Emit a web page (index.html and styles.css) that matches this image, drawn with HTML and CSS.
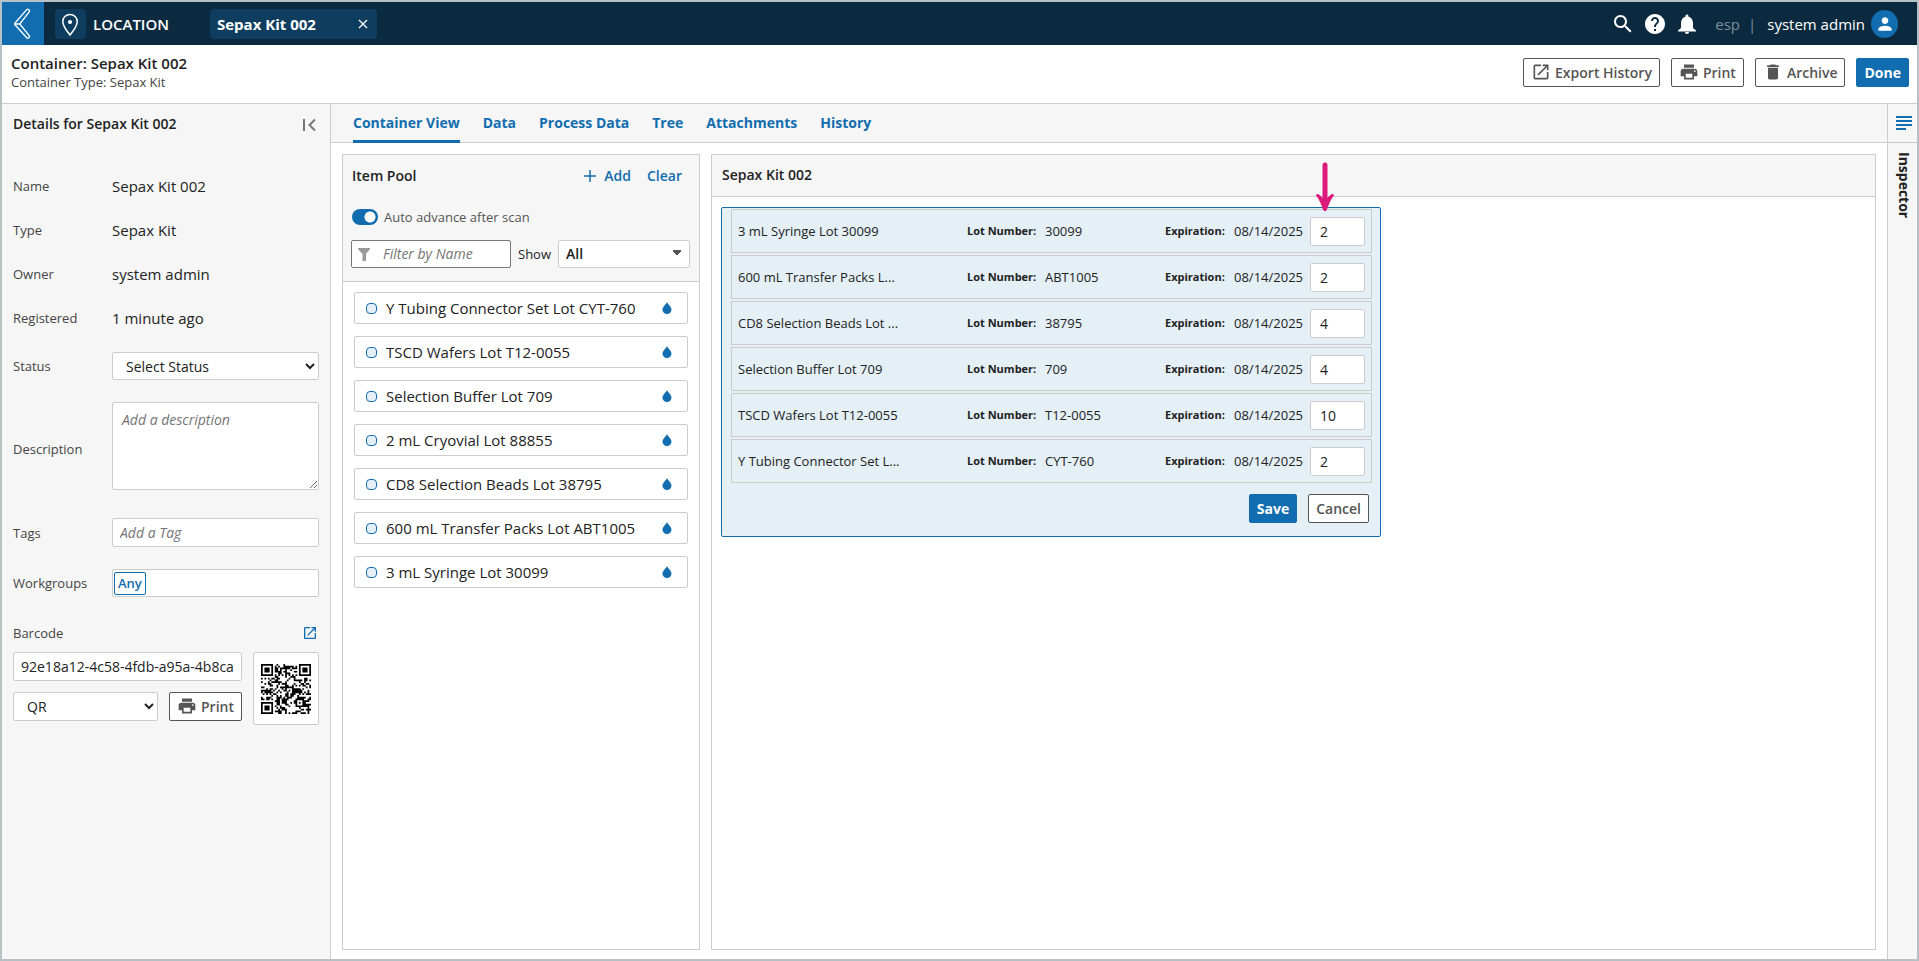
FILE: index.html
```html
<!DOCTYPE html>
<html lang="en">
<head>
<meta charset="utf-8">
<title>Sepax Kit 002</title>
<link rel="stylesheet" href="styles.css">
</head>
<body>
<svg class="sprite" aria-hidden="true">
  <symbol id="i-print" viewBox="0 0 24 24"><path d="M19 8H5c-1.66 0-3 1.34-3 3v6h4v4h12v-4h4v-6c0-1.66-1.34-3-3-3zm-3 11H8v-5h8v5zm3-7c-.55 0-1-.45-1-1s.45-1 1-1 1 .45 1 1-.45 1-1 1zm-1-9H6v4h12V3z"/></symbol>
  <symbol id="i-open" viewBox="0 0 24 24"><path d="M19 19H5V5h7V3H5c-1.11 0-2 .9-2 2v14c0 1.1.89 2 2 2h14c1.1 0 2-.9 2-2v-7h-2v7zM14 3v2h3.59l-9.83 9.83 1.41 1.41L19 6.41V10h2V3h-7z"/></symbol>
  <symbol id="i-delete" viewBox="0 0 24 24"><path d="M6 19c0 1.1.9 2 2 2h8c1.1 0 2-.9 2-2V7H6v12zM19 4h-3.5l-1-1h-5l-1 1H5v2h14V4z"/></symbol>
  <symbol id="i-drop" viewBox="0 0 10 12"><path d="M5 0C5.600 2 9.500 4.800 9.500 7.600a4.500 4.300 0 0 1-9 0C.5 4.800 4.400 2 5 0z"/></symbol>
</svg>

<header class="topbar">
  <button class="back" aria-label="Back"><svg width="18" height="32" viewBox="0 0 18 32" fill="none" stroke="#fff" stroke-width="1.300" stroke-linejoin="round"><path d="M2.700 14.300 13.500 1.900a1.600 1.600 0 0 1 2.500 2.200L6.800 16l9.200 11.300a1.600 1.600 0 0 1-2.500 2.200L1.300 16M1.300 16 3 14M6.800 16H1.300"/></svg></button>
  <span class="place-icon"><svg width="18" height="24" viewBox="0 0 18 24"><path d="M9 1.500C4.800 1.500 1.800 4.600 1.800 8.600 1.800 13.500 9 22 9 22s7.200-8.500 7.200-13.400C16.200 4.600 13.200 1.500 9 1.500z" fill="none" stroke="#fff" stroke-width="1.500"/><circle cx="9" cy="9" r="2.100" fill="#fff"/></svg></span>
  <span class="place">LOCATION</span>
  <div class="chip"><span>Sepax Kit 002</span><button aria-label="Close tab"><svg width="10" height="10" viewBox="0 0 10 10" stroke="#fff" stroke-width="1.300"><path d="M1 1l8 8M9 1 1 9"/></svg></button></div>
  <div class="tools">
    <button aria-label="Search"><svg width="24" height="24" viewBox="0 0 24 24"><path d="M15.500 14h-.79l-.28-.27C15.410 12.590 16 11.110 16 9.500 16 5.910 13.090 3 9.500 3S3 5.910 3 9.500 5.910 16 9.500 16c1.610 0 3.090-.59 4.230-1.570l.27.28v.79l5 4.990L20.490 19l-4.990-5zm-6 0C7.010 14 5 11.990 5 9.500S7.010 5 9.500 5 14 7.010 14 9.500 11.990 14 9.500 14z"/></svg></button>
    <button aria-label="Help"><svg width="24" height="24" viewBox="0 0 24 24"><path d="M12 2C6.480 2 2 6.480 2 12s4.480 10 10 10 10-4.480 10-10S17.520 2 12 2zm1 17h-2v-2h2v2zm2.070-7.750l-.9.920C13.450 12.900 13 13.500 13 15h-2v-.5c0-1.100.45-2.100 1.170-2.830l1.240-1.260c.37-.36.59-.86.59-1.410 0-1.100-.9-2-2-2s-2 .9-2 2H8c0-2.210 1.790-4 4-4s4 1.790 4 4c0 .88-.36 1.680-.93 2.250z"/></svg></button>
    <button aria-label="Notifications"><svg width="24" height="24" viewBox="0 0 24 24"><path d="M12 22c1.100 0 2-.9 2-2h-4c0 1.100.89 2 2 2zm6-6v-5c0-3.070-1.640-5.640-4.500-6.320V4c0-.83-.67-1.500-1.500-1.500s-1.500.67-1.500 1.500v.68C7.630 5.360 6 7.920 6 11v5l-3 2.500v1h18v-1L18 16z"/></svg></button>
  </div>
  <span class="org">esp</span><span class="bar">|</span>
  <span class="user">system admin</span>
  <button class="avatar" aria-label="Account"><svg width="20" height="20" viewBox="0 0 24 24"><path d="M12 12c2.210 0 4-1.790 4-4s-1.790-4-4-4-4 1.790-4 4 1.790 4 4 4zm0 2c-2.670 0-8 1.340-8 4v2h16v-2c0-2.660-5.330-4-8-4z"/></svg></button>
</header>

<section class="titlebar">
  <div class="titles">
    <h1>Container: Sepax Kit 002</h1>
    <p>Container Type: Sepax Kit</p>
  </div>
  <div class="actions">
    <button class="btn"><svg class="ico"><use href="#i-open"/></svg>Export History</button>
    <button class="btn"><svg class="ico"><use href="#i-print"/></svg>Print</button>
    <button class="btn"><svg class="ico"><use href="#i-delete"/></svg>Archive</button>
    <button class="btn primary">Done</button>
  </div>
</section>

<div class="workspace">
  <aside class="details">
    <div class="details-head">
      <h2>Details for Sepax Kit 002</h2>
      <button aria-label="Collapse"><svg width="14" height="14" viewBox="0 0 14 14" fill="none" stroke="#777" stroke-width="2"><path d="M2 1v12M13 1.500 7.500 7l5.500 5.500"/></svg></button>
    </div>
    <dl class="facts">
      <div><dt>Name</dt><dd>Sepax Kit 002</dd></div>
      <div><dt>Type</dt><dd>Sepax Kit</dd></div>
      <div><dt>Owner</dt><dd>system admin</dd></div>
      <div><dt>Registered</dt><dd>1 minute ago</dd></div>
    </dl>
    <div class="field"><label for="status">Status</label><select id="status" class="box"><option>Select Status</option></select></div>
    <div class="field description"><label for="desc">Description</label><textarea id="desc" class="box" placeholder="Add a description"></textarea></div>
    <div class="field tags"><label for="tags">Tags</label><input id="tags" class="box" placeholder="Add a Tag"></div>
    <div class="field"><label for="groups">Workgroups</label><div class="box group-box"><button class="group">Any</button><input id="groups"></div></div>
    <div class="barcode-head"><label for="code">Barcode</label><a href="#" aria-label="Open barcode"><svg width="16" height="16"><use href="#i-open"/></svg></a></div>
    <div class="barcode">
      <div class="barcode-fields">
        <input id="code" class="box" value="92e18a12-4c58-4fdb-a95a-4b8ca">
        <div class="barcode-row">
          <select class="box" aria-label="Barcode type"><option>QR</option></select>
          <button class="btn"><svg class="ico"><use href="#i-print"/></svg>Print</button>
        </div>
      </div>
      <div class="qr"><svg id="qr" viewBox="0 0 29 29" role="img" aria-label="QR code"></svg></div>
    </div>
  </aside>

  <main class="content">
    <nav class="tabs">
      <a href="#" class="active">Container View</a><a href="#">Data</a><a href="#">Process Data</a><a href="#">Tree</a><a href="#">Attachments</a><a href="#">History</a>
    </nav>
    <div class="panels">
      <section class="panel pool">
        <div class="pool-head">
          <div class="pool-title"><h2>Item Pool</h2><button class="link"><svg width="12" height="12" viewBox="0 0 12 12" stroke="#116daf" stroke-width="1.500"><path d="M6 0v12M0 6h12"/></svg>Add</button><button class="link">Clear</button></div>
          <label class="auto"><input type="checkbox" class="switch" checked>Auto advance after scan</label>
          <div class="filter-row">
            <div class="filter"><svg width="12" height="13" viewBox="0 0 12 13" fill="#999"><path d="M0 0h12v1L8 6v7H4.500V6L0 1z"/></svg><input aria-label="Filter" placeholder="Filter by Name"></div>
            <label for="show">Show</label>
            <select id="show" class="show"><option>All</option></select>
          </div>
        </div>
        <ul class="items">
          <li><i></i><span>Y Tubing Connector Set Lot CYT-760</span><svg><use href="#i-drop"/></svg></li>
          <li><i></i><span>TSCD Wafers Lot T12-0055</span><svg><use href="#i-drop"/></svg></li>
          <li><i></i><span>Selection Buffer Lot 709</span><svg><use href="#i-drop"/></svg></li>
          <li><i></i><span>2 mL Cryovial Lot 88855</span><svg><use href="#i-drop"/></svg></li>
          <li><i></i><span>CD8 Selection Beads Lot 38795</span><svg><use href="#i-drop"/></svg></li>
          <li><i></i><span>600 mL Transfer Packs Lot ABT1005</span><svg><use href="#i-drop"/></svg></li>
          <li><i></i><span>3 mL Syringe Lot 30099</span><svg><use href="#i-drop"/></svg></li>
        </ul>
      </section>

      <section class="panel kit">
        <h2 class="kit-title">Sepax Kit 002</h2>
        <form class="card">
          <div class="lot"><span>3 mL Syringe Lot 30099</span><b>Lot Number:</b><span>30099</span><b>Expiration:</b><span>08/14/2025</span><div class="qty"><input aria-label="Quantity" value="2"><svg class="arrow" width="18" height="50" viewBox="0 0 18 50"><path d="M9 3v38" stroke="#dc1a7c" stroke-width="5" stroke-linecap="round"/><path d="M0 33.500c.3-1.600 2-2 3-.9L9 38l6-5.400c1-1.100 2.700-.7 3 .9C14.500 37.500 12.500 43 10.800 48c-.7 1.500-2.900 1.500-3.600 0C5.500 43 3.500 37.500 0 33.500z" fill="#dc1a7c"/></svg></div></div>
          <div class="lot"><span>600 mL Transfer Packs L...</span><b>Lot Number:</b><span>ABT1005</span><b>Expiration:</b><span>08/14/2025</span><div class="qty"><input aria-label="Quantity" value="2"></div></div>
          <div class="lot"><span>CD8 Selection Beads Lot ...</span><b>Lot Number:</b><span>38795</span><b>Expiration:</b><span>08/14/2025</span><div class="qty"><input aria-label="Quantity" value="4"></div></div>
          <div class="lot"><span>Selection Buffer Lot 709</span><b>Lot Number:</b><span>709</span><b>Expiration:</b><span>08/14/2025</span><div class="qty"><input aria-label="Quantity" value="4"></div></div>
          <div class="lot"><span>TSCD Wafers Lot T12-0055</span><b>Lot Number:</b><span>T12-0055</span><b>Expiration:</b><span>08/14/2025</span><div class="qty"><input aria-label="Quantity" value="10"></div></div>
          <div class="lot"><span>Y Tubing Connector Set L...</span><b>Lot Number:</b><span>CYT-760</span><b>Expiration:</b><span>08/14/2025</span><div class="qty"><input aria-label="Quantity" value="2"></div></div>
          <div class="card-actions"><button type="button" class="btn primary">Save</button><button type="button" class="btn">Cancel</button></div>
        </form>
      </section>
    </div>
  </main>

  <aside class="inspector">
    <button aria-label="Open inspector"><svg width="16" height="14" viewBox="0 0 16 14" fill="#116daf"><path d="M0 0h16v2H0zM0 4h16v2H0zM0 8h16v2H0zM0 12h10v2H0z"/></svg></button>
    <span>Inspector</span>
  </aside>
</div>
<script src="qr.js"></script>
</body>
</html>
```

FILE: styles.css
```css
* { box-sizing: border-box; }
body {
  margin: 0;
  min-height: 100vh;
  display: flex;
  flex-direction: column;
  border: 2px solid #b6c1c5;
  font: 14px/20px "Open Sans", "Noto Sans", sans-serif;
  color: #222;
  background: #fff;
}
h1, h2, p, dl, dd, ul { margin: 0; padding: 0; }
h1, h2 { font-size: 14px; line-height: 20px; font-weight: 600; }
button, input, select, textarea { font: inherit; color: inherit; margin: 0; }
button { padding: 0; border: 0; background: none; cursor: pointer; }
a { color: #116daf; text-decoration: none; }
ul { list-style: none; }
.sprite { position: absolute; width: 0; height: 0; }

.topbar { display: flex; align-items: center; height: 43px; padding-right: 19px; background: #0b2a3f; color: #fff; }
.topbar svg { display: block; }
.back { width: 42px; height: 43px; display: grid; place-items: center; padding-right: 2px; background: #116daf; }
.place-icon { width: 31px; height: 30px; margin-left: 11px; display: grid; place-items: center; padding: 2px 2px 0 0; border-radius: 4px; background: #0f3d5f; }
.place { margin-left: 7px; font-size: 15px; font-weight: 600; }
.chip { width: 167px; height: 30px; margin-left: 41px; padding: 0 9px 0 7px; display: flex; align-items: center; justify-content: space-between; border-radius: 4px; background: #0f3d5f; font-size: 15px; font-weight: 700; }
.tools { display: flex; gap: 8px; margin-left: auto; }
.tools svg, .avatar svg { fill: #fff; }
.org, .bar { font-size: 15px; color: #7d8f9b; }
.org { margin-left: 16px; }
.bar { margin-left: 8px; }
.user { margin-left: 11px; font-size: 15px; }
.avatar { width: 27px; height: 28px; margin-left: 6px; border-radius: 50%; display: grid; place-items: center; background: #116daf; }

.titlebar { display: flex; justify-content: space-between; height: 59px; padding: 8px 8px 0 9px; border-bottom: 1px solid #ccc; }
h1 { font-size: 15px; }
.titles p { line-height: 18px; font-size: 13px; color: #444; }
.actions { display: flex; gap: 11px; padding-top: 5px; }
.btn { height: 29px; padding: 0 7px; display: inline-flex; align-items: center; border: 1px solid #555; border-radius: 2px; background: #fff; color: #555; font-size: 14px; font-weight: 600; }
.ico { width: 20px; height: 20px; margin: 0 4px 2px 0; fill: #555; }
.primary { border-color: #116daf; background: #116daf; color: #fff; font-weight: 700; }

.workspace { flex: 1; display: flex; }
.details { width: 329px; padding: 0 11px; border-right: 1px solid #ccc; background: #f6f6f6; }
.details-head { display: flex; justify-content: space-between; align-items: center; height: 40px; padding-right: 3px; }
.details-head button { height: 14px; }
.facts { padding-top: 20px; }
.facts div { display: flex; align-items: center; height: 44px; }
dt, .field label, .barcode-head label { width: 99px; font-size: 13px; color: #444; }
dd { font-size: 15px; }
.field { display: flex; align-items: center; margin-bottom: 22px; }
.facts + .field { margin-top: 12px; }
.description label { padding-top: 5px; }
.tags { margin-top: 28px; }
.box { width: 208px; height: 28px; flex: 1; min-width: 0; border: 1px solid #ccc; border-radius: 2px; background: #fff; outline: 0; }
input.box { height: 29px; padding: 0 7px; }
input::placeholder, textarea::placeholder { font-style: italic; color: #757575; }
select.box { padding: 0 0 0 9px; }
textarea.box { display: block; height: 88px; padding: 7px 9px; resize: vertical; }
.group-box { display: flex; align-items: center; padding-left: 1px; }
.group-box input { flex: 1; min-width: 0; border: 0; outline: 0; background: none; }
.group { height: 23px; padding: 0 3px; border: 1px solid #116daf; border-radius: 2px; color: #116daf; font-weight: 600; font-size: 13px; }
.barcode-head { display: flex; justify-content: space-between; align-items: center; height: 20px; margin-top: 26px; padding-right: 1px; }
.barcode-head svg { display: block; fill: #116daf; }
.barcode { display: flex; align-items: flex-start; gap: 11px; margin-top: 9px; }
.barcode-fields { flex: 1; min-width: 0; display: flex; flex-direction: column; gap: 11px; }
.barcode-fields .box { width: 100%; flex: none; }
.barcode-row { display: flex; gap: 11px; }
.barcode-row .box { width: auto; flex: 1; height: 29px; }
.qr { width: 66px; height: 73px; display: grid; place-items: center; border: 1px solid #ccc; border-radius: 2px; background: #fff; }
.qr svg { width: 50px; height: 50px; }

.content { flex: 1; min-width: 0; display: flex; flex-direction: column; }
.tabs { display: flex; gap: 23px; height: 39px; padding-left: 22px; border-bottom: 1px solid #ccc; background: #f6f6f6; }
.tabs a { height: 39px; padding-top: 9px; font-weight: 700; }
.tabs .active { border-bottom: 3px solid #116daf; }
.panels { flex: 1; display: flex; gap: 11px; padding: 11px 11px 9px; }
.panel { border: 1px solid #ccc; }
.pool { width: 358px; }
.pool-head { height: 127px; padding: 10px 9px 0 8px; border-bottom: 1px solid #ccc; background: #f6f6f6; }
.pool-title { display: flex; align-items: center; gap: 16px; padding-right: 8px; height: 22px; }
.pool-title h2 { margin-right: auto; padding-left: 1px; }
.link { display: flex; align-items: center; gap: 8px; color: #116daf; font-weight: 600; }
.auto { display: flex; align-items: center; gap: 6px; height: 20px; margin-top: 20px; padding-left: 1px; font-size: 13px; color: #555; }
.switch { appearance: none; width: 26px; height: 16px; border-radius: 8px; background: radial-gradient(circle at 18px 8px, #fff 5px, #116daf 6px); }
.filter-row { display: flex; align-items: center; margin-top: 13px; }
.filter { width: 160px; height: 28px; display: flex; align-items: center; gap: 13px; padding: 0 6px; border: 1px solid #777; border-radius: 2px; background: #fff; }
.filter svg { flex: none; }
.filter input { flex: 1; min-width: 0; border: 0; padding: 0; outline: 0; background: none; }
.filter-row label { margin: 0 auto; font-size: 13px; }
.show { appearance: none; width: 132px; height: 28px; padding: 0 7px; border: 1px solid #ccc; border-radius: 2px; font-weight: 600; background: conic-gradient(from -38deg at 50% 100%, #555 76deg, transparent 0) right 7px top 9px / 10px 6px no-repeat, #fff; }
.items { display: grid; gap: 12px; padding: 10px 11px; }
.items li { display: flex; align-items: center; height: 32px; padding: 0 15px 0 11px; border: 1px solid #ccc; border-radius: 2px; font-size: 15px; }
.items i { width: 11px; height: 11px; margin-right: 9px; border: 1px solid #116daf; border-radius: 4px; background: #e4eff6; }
.items svg { width: 10px; height: 12px; margin-left: auto; fill: #116daf; }

.kit { flex: 1; }
.kit-title { height: 42px; padding: 10px 10px 0; border-bottom: 1px solid #ccc; background: #f6f6f6; }
.card { max-width: 660px; margin: 10px 9px; padding: 1px 8px 13px 9px; border: 1px solid #116daf; border-radius: 2px; background: #e4eff6; }
.lot { display: grid; grid-template-columns: 229px 78px 120px 69px 76px 1fr; align-items: center; height: 44px; margin-bottom: 2px; padding: 0 6px; border: 1px solid #ccc; font-size: 13px; }
.lot b { font-size: 11px; }
.qty { position: relative; }
.qty input { display: block; width: 100%; height: 29px; padding: 0 9px; border: 1px solid #ccc; border-radius: 2px; background: #fff; font-size: 14px; outline: 0; }
.arrow { position: absolute; left: 6px; bottom: 34px; }
.card-actions { display: flex; justify-content: flex-end; gap: 11px; padding: 9px 3px 0 0; }

.inspector { width: 30px; display: flex; flex-direction: column; align-items: center; border-left: 1px solid #ccc; background: #f6f6f6; }
.inspector button { width: 100%; height: 39px; padding-left: 2px; border-bottom: 1px solid #ccc; }
.inspector svg { display: block; margin: 0 auto; }
.inspector span { margin-top: 9px; padding-left: 2px; writing-mode: vertical-rl; font-weight: 700; }
```

FILE: qr.js
```js
// Draws a 29-module code: three finders, one alignment mark, timing lines, data.
(function () {
  var n = 29, d = "", seed = 92181;
  function ring(x, y, cx, cy) { return Math.max(Math.abs(x - cx), Math.abs(y - cy)); }
  function dark(x, y) {
    var f = Math.min(ring(x, y, 3, 3), ring(x, y, n - 4, 3), ring(x, y, 3, n - 4));
    if (f <= 4) return f !== 4 && f !== 2;
    var a = ring(x, y, 22, 22);
    if (a <= 2) return a !== 1;
    if (x === 6 || y === 6) return (x + y) % 2 === 0;
    return (seed >>> 16) % 2 === 1;
  }
  for (var y = 0; y < n; y++) {
    for (var x = 0; x < n; x++) {
      seed ^= seed << 13;
      seed ^= seed >>> 17;
      seed ^= seed << 5;
      if (dark(x, y)) d += "M" + x + " " + y + "h1v1h-1z";
    }
  }
  var path = document.createElementNS("http://www.w3.org/2000/svg", "path");
  path.setAttribute("d", d);
  document.getElementById("qr").appendChild(path);
})();
```
